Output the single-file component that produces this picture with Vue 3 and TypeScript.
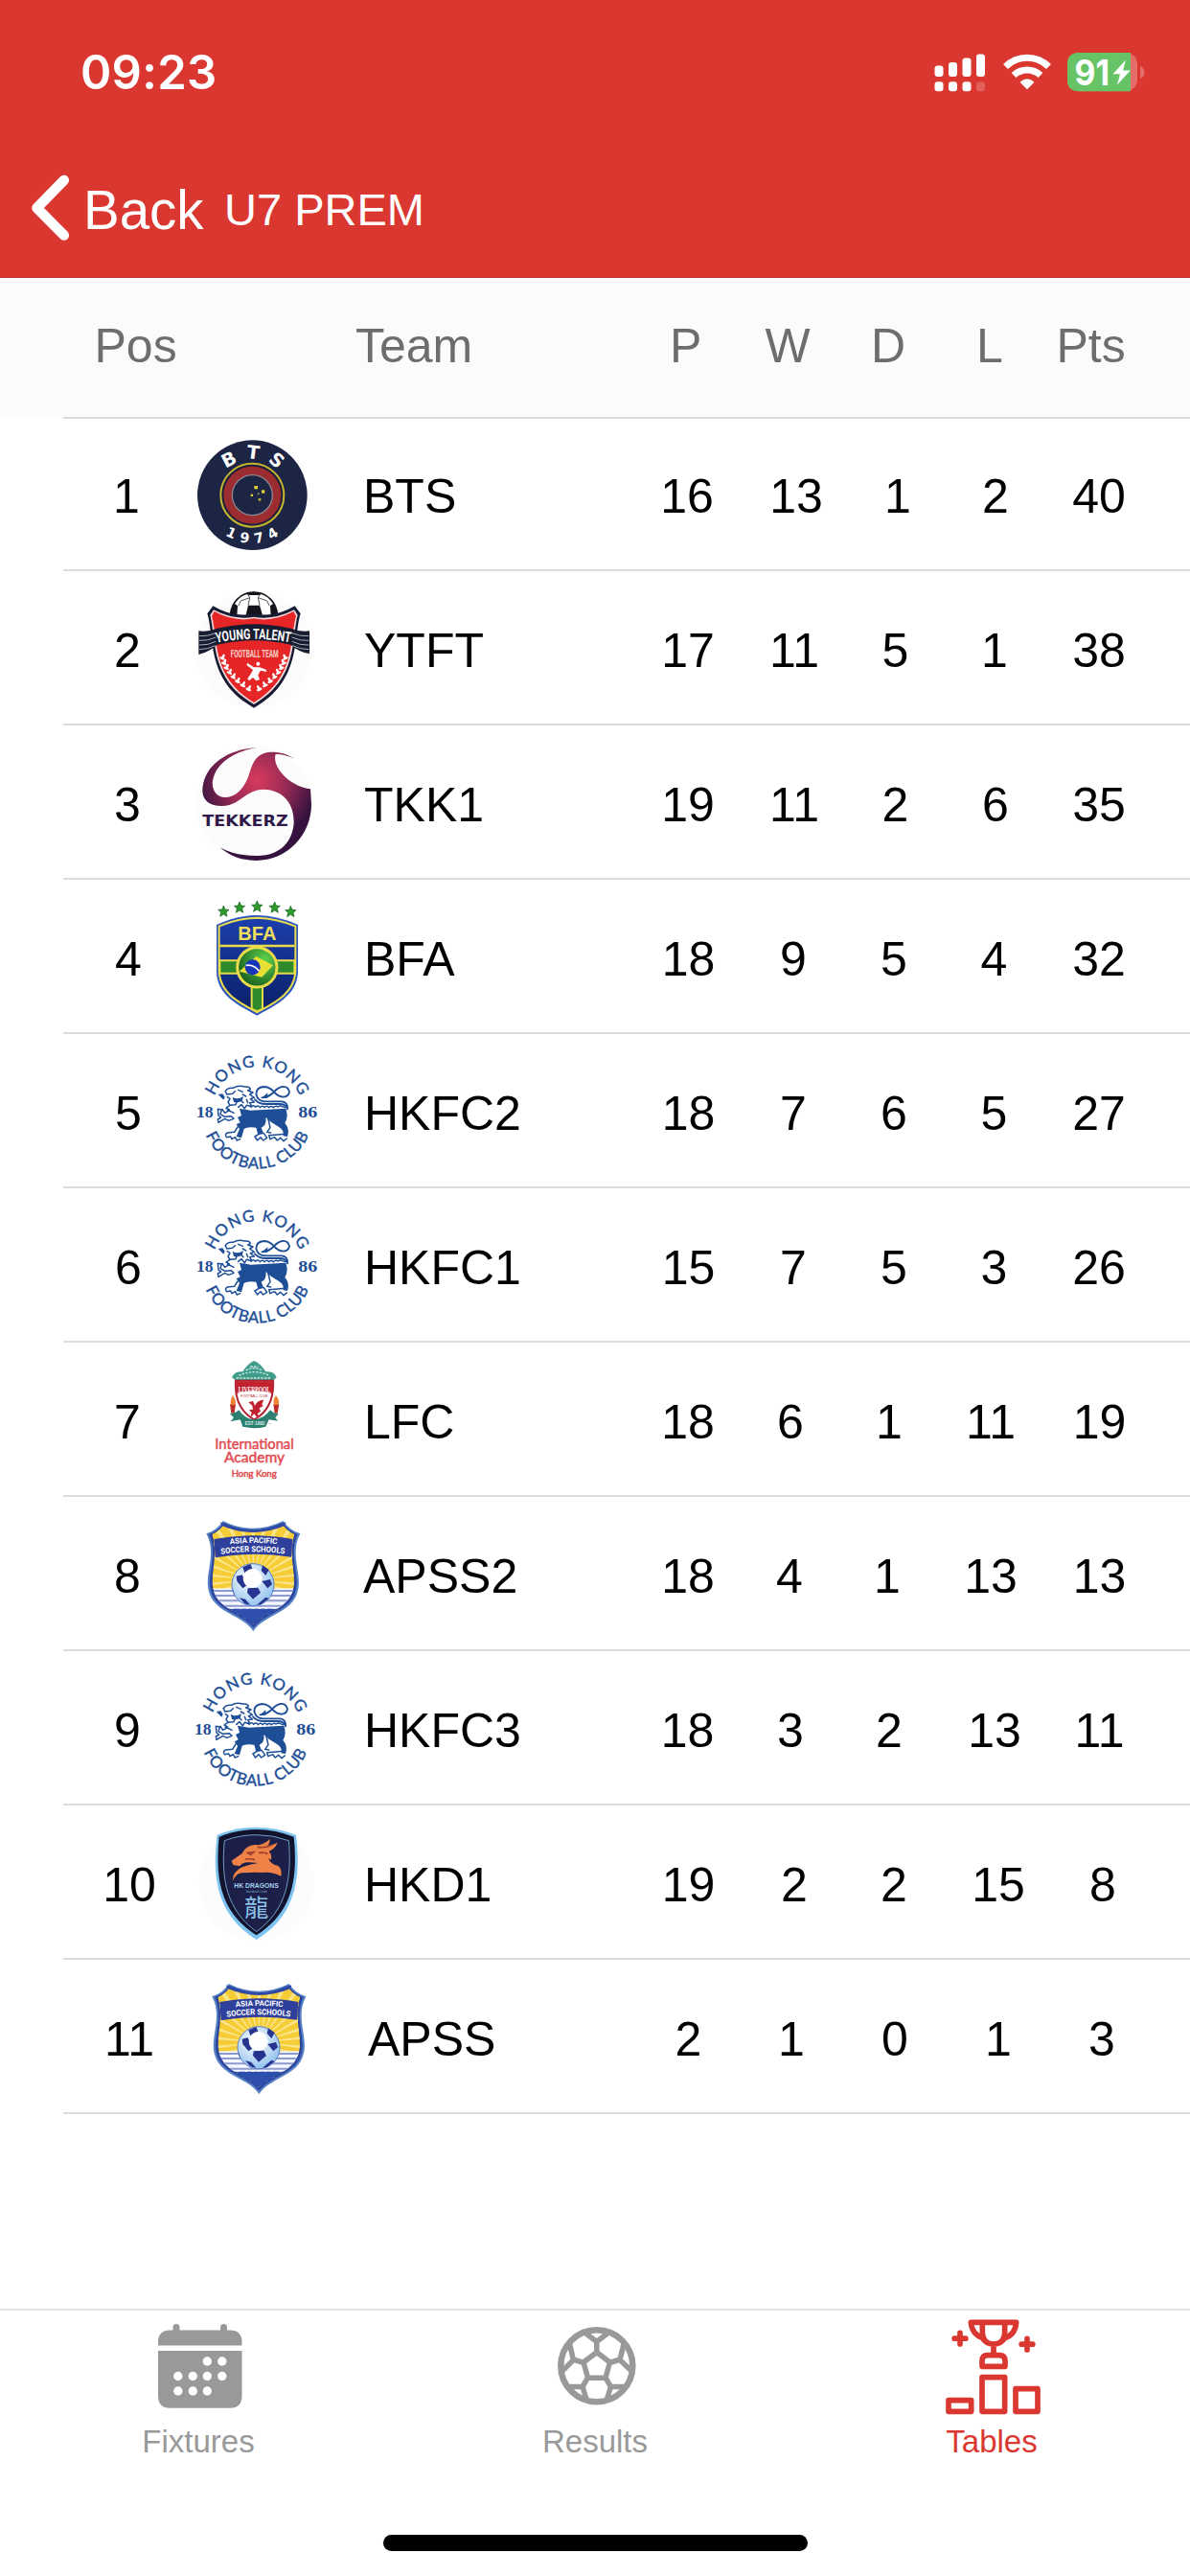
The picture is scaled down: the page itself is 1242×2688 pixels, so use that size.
<script setup lang="ts">
interface Row {
  pos: number
  team: string
  logo: string
  stats: number[]
  /* horizontal centres of the position and the five figures */
  centers: number[]
  logoX: number
  logoY: number
  teamX: number
}

const CELL = 90
const LOGO = 150
const TEAM = 240

const rows: Row[] = [
  { pos: 1, team: 'BTS', logo: 'bts', stats: [16, 13, 1, 2, 40], centers: [132, 717, 831, 937, 1039, 1147], logoX: 190, logoY: -0.5, teamX: 379 },
  { pos: 2, team: 'YTFT', logo: 'ytft', stats: [17, 11, 5, 1, 38], centers: [133, 718, 829, 934.5, 1038, 1147], logoX: 190, logoY: -1, teamX: 380 },
  { pos: 3, team: 'TKK1', logo: 'tekkerz', stats: [19, 11, 2, 6, 35], centers: [133, 718, 829, 934.5, 1039, 1147], logoX: 190, logoY: -2, teamX: 380 },
  { pos: 4, team: 'BFA', logo: 'bfa', stats: [18, 9, 5, 4, 32], centers: [134, 718.5, 828, 933, 1037.5, 1147], logoX: 190, logoY: 2, teamX: 380 },
  { pos: 5, team: 'HKFC2', logo: 'hkfc', stats: [18, 7, 6, 5, 27], centers: [134, 718.5, 828, 933, 1037.5, 1147], logoX: 190, logoY: 1, teamX: 380 },
  { pos: 6, team: 'HKFC1', logo: 'hkfc', stats: [15, 7, 5, 3, 26], centers: [134, 718.5, 828, 933, 1037.5, 1147], logoX: 190, logoY: 1, teamX: 380 },
  { pos: 7, team: 'LFC', logo: 'lfc', stats: [18, 6, 1, 11, 19], centers: [133, 718, 825, 928, 1034, 1147.5], logoX: 190, logoY: -1, teamX: 380 },
  { pos: 8, team: 'APSS2', logo: 'apss', stats: [18, 4, 1, 13, 13], centers: [133, 718, 824, 926, 1034, 1147.5], logoX: 190, logoY: 2, teamX: 379 },
  { pos: 9, team: 'HKFC3', logo: 'hkfc', stats: [18, 3, 2, 13, 11], centers: [133, 717.5, 825, 928, 1038, 1147.5], logoX: 188, logoY: 1, teamX: 380 },
  { pos: 10, team: 'HKD1', logo: 'hkd', stats: [19, 2, 2, 15, 8], centers: [135, 718.5, 829, 933, 1042, 1151], logoX: 190, logoY: 0, teamX: 380 },
  { pos: 11, team: 'APSS', logo: 'apss', stats: [2, 1, 0, 1, 3], centers: [135, 718.5, 826, 934, 1042, 1150], logoX: 196, logoY: 2, teamX: 384 },
]

function statGap(row: Row, i: number): string {
  const c = row.centers
  const prev = i === 0 ? row.teamX + TEAM : c[i] + CELL / 2
  return c[i + 1] - CELL / 2 - prev + 'px'
}

const px = (n: number) => n + 'px'
const dots = [[50, 39], [65.5, 39], [19.5, 54.5], [35, 54.5], [50, 54.5], [65.5, 54.5], [19.5, 70], [35, 70], [50, 70]]
const leaves = [0, 1, 2, 3, 4, 5, 6, 7].map((i) => ({
  x: 126 + i * 4 + i * i * 1.1,
  y: 258 + i * 16 - i * i * 0.3,
}))
const rays = Array.from({ length: 30 }, (_, i) => i * 12)
const stars = [[130, 75], [180, 63], [235, 60], [290, 63], [340, 76]]
</script>

<template>
  <div class="screen">
    <svg class="sprites" width="0" height="0" aria-hidden="true">
      <defs>
        <radialGradient id="tk" gradientUnits="userSpaceOnUse" cx="235" cy="160" r="190">
          <stop offset="0" stop-color="#d83b5c" /><stop offset=".45" stop-color="#9e2c56" /><stop offset="1" stop-color="#35123f" />
        </radialGradient>
        <linearGradient id="blue" x1="0" y1="0" x2="0" y2="1">
          <stop offset="0" stop-color="#1c3fae" /><stop offset="1" stop-color="#0a1f66" />
        </linearGradient>
        <radialGradient id="ball" cx=".4" cy=".35" r=".7">
          <stop offset="0" stop-color="#fff" /><stop offset="1" stop-color="#8fc0ee" />
        </radialGradient>
        <radialGradient id="green" cx=".7" cy=".3" r=".8">
          <stop offset="0" stop-color="#5ed04e" /><stop offset="1" stop-color="#145a1c" />
        </radialGradient>
        <clipPath id="apss-clip"><path d="M130 63 Q222 103 315 63 Q330 85 352 93 C330 160 360 220 348 265 C335 325 260 340 223 375 C185 340 110 325 98 265 C86 220 116 160 94 93 Q116 85 130 63Z" /></clipPath>
        <clipPath id="yt-clip"><rect x="100" y="30" width="250" height="92" /></clipPath>
        <path id="bts-top" d="M107 230 A113 113 0 0 1 333 230" />
        <path id="bts-bottom" d="M70 230 A150 150 0 0 0 370 230" />
        <path id="yt-arc" d="M108 209 Q225 186 342 209" />
        <path id="hk-top" d="M92 225 A143 143 0 0 1 378 225" />
        <path id="hk-bottom" d="M59 225 A176 176 0 0 0 411 225" />
        <path id="ap-1" d="M150 124 Q225 116 302 124" />
        <path id="ap-2" d="M122 155 Q222 140 326 155" />
      </defs>
    </svg>

    <header class="top">
      <div class="status">
        <span class="time">09:23</span>
        <svg class="status-icons" width="222" height="44" viewBox="974 54 222 44">
          <g fill="#fff">
            <rect x="975.5" y="68.5" width="9" height="11.5" rx="3" /><rect x="990" y="65" width="9" height="15" rx="3" /><rect x="1004.5" y="60.5" width="9" height="19.5" rx="3" /><rect x="1019" y="56.5" width="9" height="23.5" rx="3" />
            <rect x="975.5" y="85.3" width="9" height="10" rx="3" /><rect x="990" y="85.3" width="9" height="10" rx="3" /><rect x="1004.5" y="85.3" width="9" height="10" rx="3" /><rect x="1019" y="85.3" width="9" height="10" rx="3" opacity=".2" />
            <path d="M1072 93.3 L1065 86.2 Q1064.5 85.5 1065.5 84.8 Q1072 79.8 1078.5 84.8 Q1079.5 85.5 1079 86.2Z" />
          </g>
          <path d="M1049.5 69.5 Q1059 60.2 1072 60.2 Q1085 60.2 1094.5 69.5M1058 78.5 Q1064 73 1072 73 Q1080 73 1086 78.5" fill="none" stroke="#fff" stroke-width="7" />
          <rect x="1114" y="55" width="73" height="40.3" rx="12" fill="#e46d69" />
          <path d="M1126 55 H1180 V95.3 H1126 Q1114 95.3 1114 83.3 V67 Q1114 55 1126 55Z" fill="#67c466" />
          <path d="M1190 69 Q1194.5 71 1194.5 75.5 Q1194.5 80 1190 82Z" fill="#e46d69" />
          <text class="inter" x="1121.5" y="88.5" fill="#fff" font-size="37" textLength="36.5" lengthAdjust="spacingAndGlyphs">91</text>
          <path d="M1175 62.5 L1161.5 77.3 H1169 L1166 88.5 L1179.8 73.5 H1172Z" fill="#fff" />
        </svg>
      </div>
      <nav class="nav">
        <svg class="chevron" width="44" height="72" viewBox="30 181 44 72"><path d="M66.8 188 L38.5 217 L66.8 245.5" fill="none" stroke="#fff" stroke-width="10.5" stroke-linecap="round" stroke-linejoin="round" /></svg>
        <span class="back">Back</span>
        <span class="title">U7 PREM</span>
      </nav>
    </header>

    <section class="thead">
      <span class="h-pos">Pos</span><span class="h-team">Team</span><span class="h-p">P</span><span class="h-w">W</span><span class="h-d">D</span><span class="h-l">L</span><span class="h-pts">Pts</span>
    </section>

    <main class="table">
      <div v-for="row in rows" :key="row.pos" class="row">
        <span class="cell" :style="{ marginLeft: px(row.centers[0] - CELL / 2) }">{{ row.pos }}</span>
        <svg class="logo" viewBox="0 0 450 450" :style="{ marginLeft: px(row.logoX - row.centers[0] - CELL / 2), marginTop: px(row.logoY * 2) }">
          <g v-if="row.logo === 'bts'">
            <circle cx="220" cy="230" r="172" fill="#1d2544" />
            <circle cx="220" cy="230" r="99" fill="none" stroke="#c5b52e" stroke-width="6" />
            <circle cx="220" cy="230" r="92" fill="#1c1b2a" />
            <circle cx="220" cy="230" r="90" fill="#9b2d31" />
            <circle cx="220" cy="230" r="63" fill="#1d2544" stroke="#8c8592" stroke-width="4" />
            <g fill="#e0cc35"><rect x="226" y="201" width="11" height="10" /><rect x="249" y="214" width="10" height="10" /><rect x="215" y="227" width="7" height="7" /><rect x="239" y="240" width="8" height="8" opacity=".8" /><circle cx="239" cy="226" r="3" opacity=".7" /></g>
            <text class="deja" fill="#fff" font-size="58" letter-spacing="26" text-anchor="middle"><textPath href="#bts-top" startOffset="53.5%">BTS</textPath></text>
            <text class="deja" fill="#fff" font-size="43" letter-spacing="20" text-anchor="middle"><textPath href="#bts-bottom" startOffset="52%">1974</textPath></text>
          </g>

          <g v-else-if="row.logo === 'ytft'">
            <circle cx="225" cy="230" r="182" fill="#fcfcfc" />
            <g clip-path="url(#yt-clip)">
              <circle cx="225" cy="124" r="73" fill="#fff" stroke="#15151f" stroke-width="5" />
              <path d="M207 92h36l10 34h-54zM199 54l26-4 26 4-8 6h-36zM152 112l12-26 10 8-2 32h-26zM298 112l-12-26-10 8 2 32h26z" fill="#12131b" />
              <path d="M207 58 L212 68 207 92M243 58 L238 68 243 92M176 94 L184 78 212 68M274 94 L266 78 238 68" fill="none" stroke="#555" stroke-width="3" />
            </g>
            <path d="M97 94 Q160 132 225 118 Q290 132 353 94 L371 118 C348 190 375 330 225 413 C75 330 102 190 79 118Z" fill="#171b33" />
            <path d="M99 106 Q165 140 225 128 Q285 140 351 106 L362 122 C342 200 364 320 225 402 C86 320 108 200 88 122Z" fill="#f5dcdc" />
            <path d="M101 111 Q165 145 225 133 Q285 145 349 111 L357 125 C336 200 358 316 225 396 C92 316 114 200 93 125Z" fill="#e52526" />
            <path d="M52 172 Q80 176 110 164 Q225 137 340 164 Q370 176 399 172 V243 Q365 238 340 215 Q225 188 110 215 Q85 238 52 246Z" fill="#171c30" />
            <path d="M54 188 Q80 190 108 178M54 202 Q80 204 106 192M54 216 Q80 218 106 205M54 230 Q80 230 104 218M397 188 Q370 190 342 178M397 202 Q370 204 344 192M397 216 Q370 218 344 205M397 230 Q370 230 346 218" fill="none" stroke="#a9adb8" stroke-width="3" />
            <text class="cond" fill="#fff" font-size="45"><textPath href="#yt-arc" textLength="232" lengthAdjust="spacingAndGlyphs">YOUNG TALENT</textPath></text>
            <text class="cond" x="152" y="254" fill="#f8d0c8" font-size="30" textLength="150" lengthAdjust="spacingAndGlyphs">FOOTBALL TEAM</text>
            <g fill="#fff">
              <g v-for="(l, i) in leaves" :key="i">
                <ellipse :cx="l.x" :cy="l.y - 6" rx="4" ry="8.5" :transform="`rotate(28 ${l.x} ${l.y})`" />
                <ellipse :cx="l.x" :cy="l.y" rx="9" ry="4" :transform="`rotate(25 ${l.x} ${l.y})`" />
                <ellipse :cx="450 - l.x" :cy="l.y - 6" rx="4" ry="8.500" :transform="`rotate(-28 ${450 - l.x} ${l.y})`" />
                <ellipse :cx="450 - l.x" :cy="l.y" rx="9" ry="4" :transform="`rotate(-25 ${450 - l.x} ${l.y})`" />
              </g>
              <circle cx="238" cy="275" r="6" />
              <path d="M204 272 L225 286 H243 L263 293 L265 300 L246 296 L238 310 L243 325 L232 328 L222 318 L210 328 L205 322 L216 305 L222 294 L203 280Z" />
            </g>
          </g>

          <g v-else-if="row.logo === 'tekkerz'">
            <circle cx="225" cy="230" r="182" fill="#fcfcfc" />
            <path d="M235 57 C140 62 64 115 64 195 C66 225 90 241 125 240 C185 238 195 190 255 188 C320 190 352 235 350 295 C345 350 310 396 235 396 C190 396 150 388 120 370 C150 398 190 411 232 411 C330 411 405 330 405 235 L402 187 C340 180 280 120 293 78 C315 77 340 85 355 95 C330 75 300 70 275 71 C235 75 222 100 212 135 C200 175 175 213 135 213 C105 212 90 185 97 155 C110 105 160 70 235 57Z" fill="url(#tk)" />
            <text class="deja" x="64" y="304" fill="#2f1a49" font-size="48" textLength="268" lengthAdjust="spacingAndGlyphs">TEKKERZ</text>
          </g>

          <g v-else-if="row.logo === 'bfa'">
            <path v-for="(s, i) in stars" :key="i" d="M0-18 5-6 17-5 8 3 11 16 0 9-11 16-8 3-17-5-5-6Z" :transform="`translate(${s[0]} ${s[1]})`" fill="#2c9a2c" stroke="#165a18" stroke-width="2" />
            <path d="M108 117 Q170 88 235 87 Q300 88 363 117 V265 C360 340 290 370 235 401 C180 370 110 340 108 265Z" fill="#2b55c0" />
            <path d="M116 122 Q175 96 235 95 Q295 96 355 122 V265 C350 333 288 362 235 391 C182 362 120 333 116 265Z" fill="url(#blue)" stroke="#e9dc4a" stroke-width="6" />
            <path d="M118 229h234v40h-234zM218 310h34v70l-17 8-17-8z" fill="#2f8a2b" stroke="#e9dc4a" stroke-width="6" />
            <path d="M118 183h234" stroke="#e9dc4a" stroke-width="7" />
            <circle cx="235" cy="250" r="62" fill="url(#green)" stroke="#e9dc4a" stroke-width="9" />
            <path d="M179 263 L232 216 L285 244 L250 281Z" fill="#e8df35" />
            <circle cx="221" cy="250" r="24" fill="#1735b8" />
            <path d="M200 244 Q225 240 241 262" fill="none" stroke="#fff" stroke-width="5" />
            <text class="sans b" x="175" y="164" fill="#f0df5c" font-size="63" textLength="120" lengthAdjust="spacingAndGlyphs">BFA</text>
          </g>

          <g v-else-if="row.logo === 'hkfc'">
            <g fill="#1d4e96">
              <text class="lato" stroke="#1d4e96" stroke-width="1.2" font-size="50" text-anchor="middle"><textPath href="#hk-top" startOffset="50%" textLength="342">HONG KONG</textPath></text>
              <text class="lato" stroke="#1d4e96" stroke-width="1.2" font-size="50" text-anchor="middle"><textPath href="#hk-bottom" startOffset="50%" textLength="408">FOOTBALL CLUB</textPath></text>
              <text class="serif" x="45" y="241" font-size="52" textLength="53" lengthAdjust="spacingAndGlyphs">18</text>
              <text class="serif" x="364" y="241" font-size="52" textLength="60" lengthAdjust="spacingAndGlyphs">86</text>
              <path d="M180 212 L215 218 L325 212 Q334 240 322 258 Q338 275 330 300 L316 298 Q322 280 300 268 Q280 258 262 240 Q266 264 248 272 L256 292 L238 294 L232 272 Q205 268 194 276 L186 304 L170 300 L180 276 L170 262 L182 256 L174 240 L186 234Z" />
              <path d="M113 168 L127 166 L134 176 L130 185Z" />
              <path d="M249 179 L268 163 L268 179Z" />
              <path d="M158 176 q16 10 34-2 l-4 14 q-14 8-26 4Z" />
            </g>
            <g fill="none" stroke="#1d4e96" stroke-width="4.5" stroke-linecap="round" stroke-linejoin="round">
              <path d="M136 158 Q142 146 160 148 Q176 138 196 144 Q212 142 214 152 L206 156 L222 162 L212 168 L226 178 L214 182 L226 192 L212 194 L218 206 L202 202 L196 212 L186 200 L176 208" />
              <path d="M136 158 L140 168 L158 166 L166 158M142 176 L150 182 L144 192 L150 202 L168 200 L172 188M176 154 L190 160M190 168 l10 6M184 186l8 8M202 184l4 10" />
              <path d="M150 202 L138 210 L148 216 M112 214 L124 216 L120 230 L134 238 L154 236 L162 244 L146 250 L134 244 L114 256 L112 246 L122 240 L114 234 L112 214 M142 216 L162 226 M126 214 l8 12 10-6" />
              <path d="M174 270 L164 286 L142 288 Q132 294 140 302 L152 300 L156 308 L166 302 L172 312 L182 308M236 272 L244 290 L228 300 L236 312 L246 302 L254 312 L266 304 L256 290M270 246 L276 272 L266 286 L278 288M322 292 L300 294 L272 296 L276 308 L290 302 L298 312 L308 304 L318 314 L328 306" />
              <path d="M216 208 q8-10 14 0 q8-8 14 1 q8-8 14 0 q8-8 14 0 q8-7 14 0 q8-7 14-2 q8-6 14-1 l8 3" />
              <path d="M330 214 Q332 192 312 190 H260 Q238 190 232 168 Q232 146 256 144 Q272 144 286 158 Q300 176 318 176 Q334 174 336 160 Q332 142 314 144 Q300 146 286 162 Q270 178 250 178 M326 208 Q322 198 306 198 H262 Q240 198 228 184" stroke-width="5.5" />
            </g>
          </g>

          <g v-else-if="row.logo === 'lfc'">
            <path d="M156 94 Q165 72 190 76 Q206 50 226 42 Q246 50 262 76 Q288 72 296 94 L286 103 H168Z" fill="#3f9c8b" />
            <path d="M178 88 Q225 66 274 88M200 72 Q226 58 252 72M214 60h24M170 96h110" fill="none" stroke="#cde9e3" stroke-width="4" stroke-dasharray="7 4" />
            <path d="M168 104 H285 Q290 190 226 226 Q162 190 168 104Z" fill="#fff" stroke="#b3222f" stroke-width="6" />
            <path d="M170 106 H283 V144 Q226 128 170 144Z" fill="#c2222f" />
            <text class="serif" x="176" y="142" fill="#fff" font-size="25" textLength="100" lengthAdjust="spacingAndGlyphs">LIVERPOOL</text>
            <text class="sans" x="184" y="155" fill="#c2222f" font-size="9" textLength="84" lengthAdjust="spacingAndGlyphs">FOOTBALL CLUB</text>
            <path d="M208 172 L222 168 L228 182 Q236 164 256 164 L250 178 L254 184 L242 190 L246 200 L236 208 L244 220 L232 216 L226 208 L214 220 L218 204 L210 196 L222 194 L220 182Z" fill="#c2222f" />
            <path d="M150 178h18l-4 28h-10zM286 178h18l-5 28h-9z" fill="#ba2d2b" />
            <path d="M159 150 Q172 168 166 180 H154 Q148 166 159 150ZM294 150 Q308 168 301 180 H289 Q282 166 294 150Z" fill="#f08033" />
            <path d="M150 208 Q168 206 178 196 Q196 224 226 226 Q256 224 276 196 Q288 208 302 208 L292 220 L300 230 L272 226 L262 248 Q226 258 190 248 L182 226 L152 232 L162 220Z" fill="#2d7f70" />
            <text class="sans b" x="197" y="244" fill="#d8efe9" font-size="14" textLength="62">EST·1892</text>
            <text class="sans" x="270" y="244" fill="#777" font-size="9">™</text>
            <g fill="#df4b51" stroke="#df4b51" stroke-width="1.4">
              <text class="lato" x="103" y="317" font-size="44" textLength="247" lengthAdjust="spacingAndGlyphs">International</text>
              <text class="lato" x="132" y="360" font-size="44" textLength="189" lengthAdjust="spacingAndGlyphs">Academy</text>
              <text class="lato" x="155" y="405" font-size="27" textLength="141" lengthAdjust="spacingAndGlyphs">Hong Kong</text>
            </g>
          </g>

          <g v-else-if="row.logo === 'apss'">
            <path d="M128 51 Q222 98 317 51 Q335 80 370 91 C335 155 378 220 362 272 C345 340 255 345 223 397 C192 345 101 340 84 272 C68 220 111 155 76 91 Q111 80 128 51Z" fill="#5681c6" />
            <path d="M130 56 Q222 101 315 56 Q332 82 362 93 C332 158 370 220 356 270 C340 334 258 340 223 386 C189 340 106 334 90 270 C76 220 114 158 84 93 Q114 82 130 56Z" fill="#2d479f" />
            <g clip-path="url(#apss-clip)">
              <rect x="80" y="55" width="290" height="210" fill="#f6cd36" />
              <g fill="#fbe58a"><path v-for="a in rays" :key="a" d="M223 235 L215 -20 L231 -20Z" :transform="`rotate(${a} 223 235)`" /></g>
              <rect x="80" y="262" width="290" height="64" fill="#f4f7ff" />
              <path d="M80 270h290M80 285h290M80 301h290M80 317h290" stroke="#8e9bd0" stroke-width="6" />
              <rect x="80" y="327" width="290" height="70" fill="#2f4fae" />
            </g>
            <path d="M120 55 Q222 105 325 55 L322 66 Q222 108 124 66Z" fill="#3049a5" />
            <path d="M100 108 Q222 86 346 108 L342 164 Q222 146 104 166Z" fill="#2f3f9c" />
            <g fill="#fff">
              <text class="cond" font-size="24"><textPath href="#ap-1" textLength="148" lengthAdjust="spacingAndGlyphs">ASIA PACIFIC</textPath></text>
              <text class="cond" font-size="25"><textPath href="#ap-2" textLength="200" lengthAdjust="spacingAndGlyphs">SOCCER SCHOOLS</textPath></text>
            </g>
            <circle cx="222" cy="251" r="66" fill="url(#ball)" stroke="#5b80c9" stroke-width="3" />
            <path d="M190 196 L214 186 L220 200 L196 214ZM252 190 L272 204 L262 222 L248 206ZM170 224 L188 220 L204 252 L190 262 L172 240ZM158 262l8 24-5-10ZM250 240 L276 234 L282 250 L268 262ZM206 262 L238 260 L246 276 L222 296 L204 276ZM180 292 L198 296 L214 314 L196 310ZM262 290 L272 294 L248 312 L234 314Z" fill="#27348f" />
            <circle cx="221" cy="231" r="30" fill="#fff" />
          </g>

          <g v-else>
            <circle cx="233" cy="225" r="180" fill="#fcfcfc" />
            <path d="M110 74 Q170 50 233 50 Q296 50 357 74 C375 220 350 330 233 402 C116 330 91 220 110 74Z" fill="#7fc4f0" />
            <path d="M116 80 Q172 58 233 57 Q294 58 350 80 C364 220 342 318 233 388 C124 318 102 220 116 80Z" fill="#11142c" />
            <path d="M133 92 Q180 74 233 74 Q286 74 334 92 C345 215 325 310 233 377 C141 310 121 215 133 92Z" fill="#1c1f47" stroke="#6f9cc4" stroke-width="3" />
            <path d="M155 155 L188 132 Q205 100 240 106 Q262 100 275 87 Q276 100 268 108 Q285 106 299 98 Q292 116 272 126 Q284 136 278 152 L270 146 Q278 168 300 170 Q314 180 310 203 Q280 188 250 192 Q215 190 180 194 Q168 198 158 218 Q160 186 190 174 Q215 166 238 162 L210 160 Q190 158 180 172 L160 168Z" fill="#ef8247" />
            <path d="M206 130l18-2-10 8zM236 112 Q262 116 282 106M240 130 Q262 128 268 134M198 150 q16-2 30 2" fill="none" stroke="#a33f2c" stroke-width="5" />
            <text class="sans b" x="163" y="241" fill="#a7d0ef" font-size="24" textLength="139" lengthAdjust="spacingAndGlyphs">HK DRAGONS</text>
            <text class="sans" x="200" y="254" fill="#7fa3c6" font-size="13" textLength="66" lengthAdjust="spacingAndGlyphs">football club</text>
            <text class="cjk" x="233" y="330" fill="#8cc3ea" font-size="76" text-anchor="middle">龍</text>
          </g>
        </svg>
        <span class="team" :style="{ marginLeft: px(row.teamX - row.logoX - LOGO) }">{{ row.team }}</span>
        <span v-for="(s, i) in row.stats" :key="i" class="cell" :style="{ marginLeft: statGap(row, i) }">{{ s }}</span>
      </div>
    </main>

    <footer class="tabs">
      <div class="tab">
        <svg class="i-cal" width="88" height="88" viewBox="0 0 88 88">
          <path d="M0 22.5 V19 Q0 6.5 12.5 6.5 H15.5 V3.5 A3.5 3.5 0 0 1 22.5 3.5 V6.5 H65 V3.5 A3.5 3.5 0 0 1 72 3.5 V6.5 H75 Q87.5 6.5 87.5 19 V22.5Z" fill="#999" />
          <path d="M0 28 H87.5 V75 Q87.5 87.7 75 87.7 H12.5 Q0 87.7 0 75Z" fill="#999" />
          <circle v-for="(d, i) in dots" :key="i" :cx="d[0] + 1.3" :cy="d[1]" r="4.7" fill="#fff" />
        </svg>
        <span>Fixtures</span>
      </div>
      <div class="tab">
        <svg class="i-ball" width="82" height="82" viewBox="0 0 82 82" fill="none" stroke="#999" stroke-width="5.5" stroke-linejoin="round">
          <circle cx="40.8" cy="40.8" r="37.5" stroke-width="6.5" />
          <path d="M40.8 26.5 L54.5 37 L50 53.3 H31.5 L27 37ZM40.8 27 V14.5 M40.8 15.5 L29 6.5 M40.8 15.5 L52.5 6.5 M27.5 37.5 L16 34 M16.5 34.5 L5 46 M16.5 34.5 L12.5 18 M54 37.5 L65.5 34 M65 34.5 L77 46 M65 34.5 L69 18 M31.5 53 L26 62.5 M26 62.5 H10 M26 62.5 L30.5 77 M50 53 L55.5 62.5 M55.5 62.5 H71.5 M55.5 62.5 L51 77" />
        </svg>
        <span>Results</span>
      </div>
      <div class="tab active">
        <svg class="i-cup" width="100" height="100" viewBox="170 88 300 300" fill="none" stroke="#db3731" stroke-width="17" stroke-linejoin="round">
          <path d="M249 98 H391 Q388 137 355 147 Q344 166 320 166 Q296 166 285 147 Q252 135 249 98ZM285 98 V131 Q287 166 320 166 Q353 166 355 131 V98M320 166 V200M284 236 V219 Q284 201 301 201 H338 Q356 201 356 219 V236ZM284 270 H355 V377 H284ZM389 306 H458 V377 H389ZM179 342 H250 V377 H179Z" />
          <path d="M215 131 V166M197.5 148.5 H232.5M425 149 V184M407.5 166.5 H442.5" stroke-linecap="round" />
        </svg>
        <span>Tables</span>
      </div>
      <div class="home"></div>
    </footer>
  </div>
</template>

<style>
body { margin: 0; background: #fff; }
</style>

<style scoped>
.screen { width: 1242px; height: 2688px; display: flex; flex-direction: column; overflow: hidden; background: #fff; color: #000; font-family: "Liberation Sans", Arial, sans-serif; white-space: nowrap; }
.sprites { position: absolute; }
.sans { font-family: "Liberation Sans", sans-serif; }
.b { font-weight: 700; }
.deja { font-family: "DejaVu Sans", sans-serif; font-weight: 700; }
.cond { font-family: "Roboto", sans-serif; font-weight: 700; }
.lato { font-family: "Lato", sans-serif; font-weight: 400; }
.serif { font-family: "Liberation Serif", serif; font-weight: 700; }
.cjk { font-family: "Noto Sans CJK TC", sans-serif; }
.inter { font-family: "Inter", sans-serif; font-weight: 700; }
.top { height: 289px; border-bottom: 1px solid #c4322c; background: #db3731; color: #fff; flex: none; }
.status { display: flex; align-items: center; justify-content: space-between; height: 152px; padding: 0 46px 0 84px; box-sizing: border-box; }
.time { font: 600 49px/60px "Inter", sans-serif; letter-spacing: 0.3px; }
.nav { display: flex; align-items: center; height: 130px; padding-left: 30px; }
.back { font-size: 56.5px; line-height: 64px; margin: 6px 0 0 13px; width: 147px; }
.title { font-size: 47px; line-height: 54px; margin-top: 3px; }
.thead { display: flex; align-items: center; height: 145px; flex: none; padding-bottom: 3px; box-sizing: border-box; background: #fbfbfb; color: #6d6d6d; font-size: 50px; line-height: 58px; }
.h-pos { margin-left: 98.5px; width: 272.5px; }
.h-team { width: 328px; }
.h-p { width: 99.5px; }
.h-w { width: 110.5px; }
.h-d { width: 110px; }
.h-l { width: 83.5px; }
.table { flex: 1; background: linear-gradient(#dcdcdc, #dcdcdc) 66px 0 / 1176px 2px no-repeat; }
.row { display: flex; align-items: center; height: 161px; font-size: 50px; line-height: 58px; background: linear-gradient(#dcdcdc, #dcdcdc) 66px 100% / 1176px 2px no-repeat; }
.cell { width: 90px; text-align: center; flex: none; padding-top: 5px; }
.team { width: 240px; flex: none; padding-top: 5px; }
.logo { width: 150px; height: 150px; flex: none; display: block; }
.tabs { position: relative; display: flex; height: 279px; flex: none; box-sizing: border-box; border-top: 2px solid #e2e2e2; }
.tab { width: 414px; display: flex; flex-direction: column; align-items: center; color: #999; font-size: 33px; line-height: 38px; }
.tab span { margin-top: auto; margin-bottom: 121px; }
.tab.active { color: #db3731; }
.i-cal { margin: 14px 0 0 4px; }
.i-ball { margin: 16.5px 0 0 4px; }
.i-cup { margin: 8.5px 0 0 3.4px; }
.home { position: absolute; left: 400px; bottom: 26px; width: 443px; height: 17px; border-radius: 9px; background: #000; }
</style>
